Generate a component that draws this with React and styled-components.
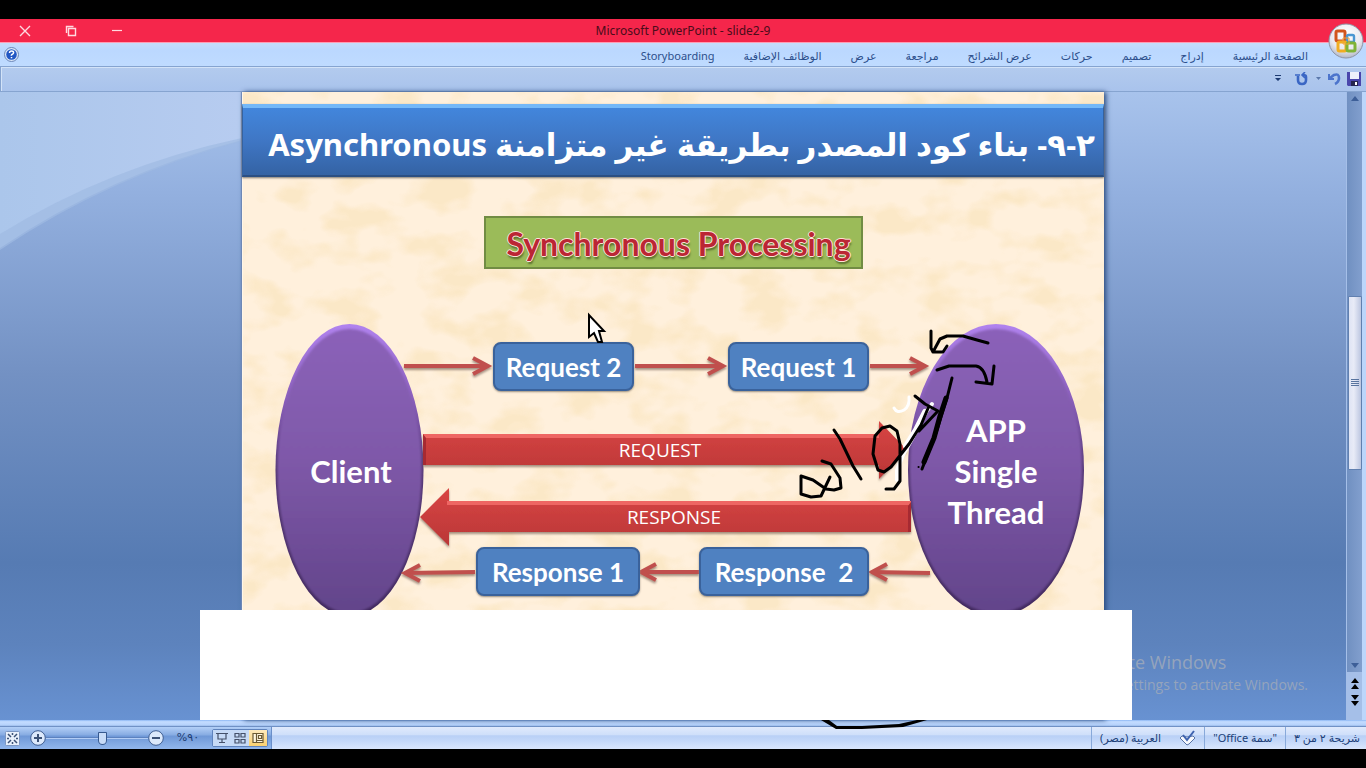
import React from "react";
import styled, { createGlobalStyle } from "styled-components";

const Global = createGlobalStyle`
  * { box-sizing: border-box; }
  body { margin: 0; background: #000; }
  button, input { font: inherit; color: inherit; margin: 0; padding: 0; border: 0; background: none; }
`;

const Screen = styled.div`
  min-height: 100vh;
  padding: 19px 0;
  background: #000;
  display: flex;
  flex-direction: column;
  overflow: hidden;
  font-family: "Noto Sans", "DejaVu Sans", sans-serif;
`;

const Frame = styled.div`
  flex: 1;
  display: flex;
  flex-direction: column;
  position: relative;
`;

const TitleBar = styled.header`
  height: 24px;
  background: #f5264b;
  border-bottom: 1px solid #ff9db4;
  display: grid;
  grid-template-columns: 1fr auto 1fr;
  align-items: center;
  color: #4a0c1a;
`;

const WindowButtons = styled.div`
  display: flex;
  gap: 30px;
  padding-left: 17px;
`;

const WindowButton = styled.button`
  width: 16px;
  height: 16px;
  display: grid;
  place-items: center;
  color: #ffd9e0;
`;

const WindowTitle = styled.h1`
  margin: 0;
  font: 400 12px/20px "Noto Sans", sans-serif;
`;

const Ribbon = styled.nav`
  height: 23px;
  background: linear-gradient(#c5dcfb, #bbd8ff 30%, #bfdbff);
  display: flex;
  align-items: center;
  justify-content: space-between;
  padding: 0 58px 0 4px;
`;

const HelpButton = styled.button`
  width: 15px;
  height: 15px;
  display: grid;
  place-items: center;
`;

const Tabs = styled.div`
  display: flex;
  direction: rtl;
  gap: 29px;
  padding-top: 2px;
`;

const Tab = styled.a`
  color: #2c4f8c;
  text-decoration: none;
  white-space: nowrap;
  font: 400 11px/20px "Noto Sans", "DejaVu Sans", sans-serif;
`;

const QuickBar = styled.div`
  height: 26px;
  background: linear-gradient(#b3cbee, #a9c3ec);
  border: 1px solid #86a4d0;
  border-width: 1px 0 1px 1px;
  box-shadow: inset 1px 1px 0 #d3e3f8;
  display: flex;
  align-items: center;
  justify-content: flex-end;
  gap: 4px;
  padding-right: 4px;
`;

const QuickButton = styled.button`
  width: ${(p) => (p.$narrow ? 8 : 16)}px;
  height: 16px;
  display: grid;
  place-items: center;
  margin-right: ${(p) => (p.$apart ? 8 : 0)}px;
`;

const OfficeButton = styled.button`
  position: absolute;
  top: 4px;
  right: 2px;
  width: 36px;
  height: 36px;
`;

const Workspace = styled.div`
  flex: 1;
  display: flex;
`;

const Canvas = styled.main`
  flex: 1;
  min-width: 0;
  display: flex;
  justify-content: center;
  position: relative;
  background: linear-gradient(#a8c3ec 0, #93b0df 16%, #7391c3 45%, #567bb3 75%, #5d83bd 88%, #6892d2);
`;

const Swoosh = styled.svg`
  position: absolute;
  left: 0;
  top: 0;
  width: 242px;
  height: 180px;
`;

const Slide = styled.article`
  width: 862px;
  flex: none;
  position: relative;
  padding-top: 12px;
  background: #fff0dc;
  border-left: 1px solid #fff6e8;
  box-shadow: 2px 0 5px #29497d, -1px 0 1px #7c96c2;
`;

const Paper = styled.svg`
  position: absolute;
  inset: 0;
  width: 100%;
  height: 100%;
`;

const SlideTitle = styled.h2`
  position: relative;
  margin: 0 0 0 -1px;
  height: 73px;
  padding: 0 8px 0 22px;
  direction: rtl;
  color: #fff;
  background: linear-gradient(#4286dc, #3f76c4 50%, #3463a4);
  border: 1px solid #35629f;
  border-top: 4px solid #74b8f8;
  border-bottom: 2px solid #2b4f82;
  box-shadow: 0 1px 2px #7c7770;
  font: 700 31px/72px "Noto Sans", "DejaVu Sans", sans-serif;
  white-space: nowrap;
`;

const Banner = styled.h3`
  position: relative;
  width: 379px;
  height: 53px;
  margin: 39px auto 0;
  padding-left: 10px;
  text-align: center;
  background: #9bbb59;
  border: 2px solid #718c43;
  color: #bb2634;
  font: 700 32px/51px Lato, "Open Sans", sans-serif;
  text-shadow: 1px 0 #fbe3d8, -1px 0 #fbe3d8, 0 1px #fbe3d8, 0 -1px #fbe3d8, 1px 3px 2px #5b7130;
`;

const Drawing = styled.svg`
  position: absolute;
  left: -1px;
  top: 0;
  width: 862px;
  height: 640px;
  overflow: visible;
  pointer-events: none;
`;

const Node = styled.div`
  position: absolute;
  left: ${(p) => p.$x - 1}px;
  top: ${(p) => p.$y}px;
  width: ${(p) => p.$w}px;
  height: 49px;
  border: 2px solid #3a629b;
  border-radius: 8px;
  background: #4f81c1;
  color: #fff;
  box-shadow: 0 1px 2px #9a8f80;
  text-align: center;
  white-space: pre;
  font: 700 26px/46px Lato, sans-serif;
`;

const Label = styled.div`
  position: absolute;
  left: ${(p) => p.$x - 1}px;
  top: ${(p) => p.$y}px;
  width: ${(p) => p.$w}px;
  text-align: center;
  color: #fff;
  font: ${(p) => (p.$light ? "400 19px/24px" : "700 31px/41px")} ${(p) => (p.$light ? '"Open Sans"' : "Lato")}, sans-serif;
`;

const Blank = styled.div`
  position: absolute;
  left: -43px;
  right: -28px;
  bottom: 0;
  height: 110px;
  background: #fff;
`;

const Watermark = styled.aside`
  position: absolute;
  right: 38px;
  bottom: 25px;
  color: #95a4bc;
  font: 400 14px/20px "Open Sans", sans-serif;
  white-space: nowrap;
`;

const WatermarkTitle = styled.p`
  margin: 0;
  font-size: 18px;
  line-height: 26px;
`;

const WatermarkText = styled.p`
  margin: 0;
`;

const ScrollColumn = styled.div`
  width: 20px;
  padding-left: 1px;
  border-right: 4px solid #bcd6fb;
  background: #a5bfe8;
  display: flex;
  flex-direction: column;
`;

const ScrollTrack = styled.div`
  flex: 1;
  background: linear-gradient(90deg, #7090c1, #829fce);
  display: flex;
  flex-direction: column;
  align-items: center;
  justify-content: space-between;
`;

const ScrollThumb = styled.div`
  width: 14px;
  height: 174px;
  margin-top: 2px;
  border: 1px solid #6180b0;
  border-radius: 1px;
  background: linear-gradient(90deg, #dfe4f4, #e8ebf7 40%, #bcc6e0);
  display: grid;
  place-items: center;
`;

const ScrollButton = styled.button`
  height: ${(p) => (p.$page ? 16 : 14)}px;
  width: 15px;
  display: grid;
  place-items: center;
`;

const PageButtons = styled.div`
  height: 48px;
  padding: 4px 0;
  display: flex;
  flex-direction: column;
`;

const Edge = styled.div`
  height: 7px;
  background: linear-gradient(#8db7f3 0, #c4dcff 25%, #b4d1fb 75%, #5578b0);
`;

const StatusBar = styled.footer`
  height: 22px;
  background: linear-gradient(#e0eafc, #cfdffa 35%, #b9d0f6 40%, #c4d8f9 65%, #d9e6fd);
  display: flex;
  align-items: stretch;
  justify-content: space-between;
`;

const ZoomGroup = styled.div`
  display: flex;
  align-items: center;
  padding-left: 4px;
  width: 272px;
  background: linear-gradient(#b3cff7, #88ade3 35%, #6f98d7 42%, #92b7ec);
  border-right: 1px solid #6b8fc9;
`;

const ZoomButton = styled.button`
  width: 16px;
  height: 16px;
  display: grid;
  place-items: center;
  margin-left: ${(p) => (p.$apart ? 10 : 0)}px;
`;

const ZoomSlider = styled.input`
  appearance: none;
  width: 102px;
  height: 16px;
  background: linear-gradient(#5c82bf 50%, #b3cdf5 50%) center / 100% 2px no-repeat;
  &::-webkit-slider-thumb {
    appearance: none;
    width: 9px;
    height: 13px;
    background: #c8dcf8;
    border: 1px solid #36598f;
    border-radius: 1px 1px 5px 5px;
  }
`;

const ZoomValue = styled.button`
  width: 48px;
  text-align: center;
  font: 400 11px/16px "DejaVu Sans", sans-serif;
  color: #1d3c72;
`;

const Views = styled.div`
  display: flex;
  height: 18px;
  border: 1px solid #5f83bd;
  border-radius: 2px;
`;

const View = styled.button`
  width: 18px;
  display: grid;
  place-items: center;
  background: ${(p) => (p.$active ? "linear-gradient(#fde9bd, #fbd170)" : "#c6daf6")};
`;

const Info = styled.div`
  display: flex;
  direction: rtl;
  padding-right: 6px;
  color: #203f78;
`;

const InfoItem = styled.span`
  display: flex;
  align-items: center;
  gap: 18px;
  padding: 0 8px;
  border-left: 1px solid #88a9da;
  font: 400 11px/20px "Noto Sans", "DejaVu Sans", sans-serif;
  white-space: nowrap;
  &:first-child { padding-right: 0; }
`;

const tabs = ["الصفحة الرئيسية", "إدراج", "تصميم", "حركات", "عرض الشرائح", "مراجعة", "عرض", "الوظائف الإضافية", "Storyboarding"];

const nodes = [
  { x: 251, y: 250, w: 141, text: "Request 2" },
  { x: 486, y: 250, w: 141, text: "Request 1" },
  { x: 234, y: 455, w: 164, text: "Response 1" },
  { x: 457, y: 455, w: 170, text: "Response  2" },
];

const arrows = [
  [162, 274, 246, 274],
  [393, 274, 481, 274],
  [628, 274, 683, 274],
  [233, 480, 163, 481],
  [457, 480, 399, 480],
  [688, 481, 630, 480],
];

function Arrow({ line: [x1, y1, x2, y2] }) {
  const d = x2 > x1 ? -15 : 15;
  return (
    <g stroke="#c0504d" strokeWidth="4" fill="none">
      <path d={`M${x1} ${y1}L${x2} ${y2}`} />
      <path d={`M${x2 + d} ${y2 - 8}L${x2} ${y2}L${x2 + d} ${y2 + 8}`} />
    </g>
  );
}

const Triangle = ({ down, color = "#3d5f98", double }) => (
  <svg width="10" height="12" viewBox="0 0 10 12" fill={color}>
    <g transform={down ? "rotate(180 5 6)" : undefined}>
      {double ? <path d="M5 0L9 5H1zM5 6L9 11H1z" /> : <path d="M5 3L9 8H1z" />}
    </g>
  </svg>
);

function Shapes() {
  return (
    <Drawing viewBox="0 0 862 640" aria-hidden="true">
      <defs>
        <linearGradient id="violet" x1="0" y1="0" x2="0" y2="1">
          <stop offset="0" stopColor="#8b62b9" />
          <stop offset="0.45" stopColor="#7f59a9" />
          <stop offset="1" stopColor="#62448a" />
        </linearGradient>
        <linearGradient id="rim" x1="0" y1="0" x2="0" y2="1">
          <stop offset="0" stopColor="#b183ef" />
          <stop offset="0.25" stopColor="#8b60bd" />
          <stop offset="0.5" stopColor="#553875" />
          <stop offset="1" stopColor="#41295e" />
        </linearGradient>
        <linearGradient id="red" x1="0" y1="0" x2="0" y2="1">
          <stop offset="0" stopColor="#d84544" />
          <stop offset="1" stopColor="#ba3636" />
        </linearGradient>
        <filter id="drop" x="-10%" y="-20%" width="120%" height="150%">
          <feDropShadow dx="0" dy="2" stdDeviation="1" floodColor="#6b5147" floodOpacity="0.6" />
        </filter>
        <filter id="soften"><feGaussianBlur stdDeviation="1" /></filter>
      </defs>
      {[[107.5, 74], [754, 88]].map(([cx, rx]) => (
        <g key={cx}>
          <ellipse cx={cx} cy="378" rx={rx} ry="146" fill="url(#rim)" />
          <ellipse cx={cx} cy="379" rx={rx - 2} ry="142" fill="url(#violet)" filter="url(#soften)" />
        </g>
      ))}
      <g filter="url(#drop)">
        <path d="M181 342H637V329L665 358L637 387V373H181z" fill="url(#red)" />
        <path d="M181 344H637" stroke="#ee6663" strokeWidth="4" />
        <path d="M181 342L184 346V373H181z" fill="#a62c30" />
        <path d="M669 409H207V396L178 425L207 454V440H669z" fill="url(#red)" />
        <path d="M205 411H669" stroke="#ee6663" strokeWidth="4" />
        <path d="M669 410L666 414V440H669z" fill="#a62c30" />
      </g>
      <g filter="url(#drop)">
        {arrows.map((line) => <Arrow key={line.join()} line={line} />)}
      </g>
    </Drawing>
  );
}

function Ink() {
  return (
    <Drawing viewBox="242 92 862 640" aria-hidden="true">
      <g fill="none" strokeLinecap="round" strokeLinejoin="round">
        <g stroke="#fff">
          <path strokeWidth="3" d="M909 397Q910 406 904 410Q897 414 894 408" />
          <path strokeWidth="4" d="M932 404L922 417L914 435L903 455L897 470V480" />
          <path strokeWidth="6" d="M925 412L916 430L906 446" />
        </g>
        <g stroke="#000" strokeWidth="3">
          <path d="M988 343L977 340L963 336L947 336L940 339L933 352L931 348V331M933 352L943 352L947 346" />
          <path d="M937 370L949 366H976Q984 367 987 382M994 366L992 384L976 382" />
          <path d="M952 378L947 398L936 433L922 469" />
          <path strokeWidth="5" d="M946 398L940 416L934 438L924 462" />
          <path d="M915 396L925 404L938 411L919 431M929 406L921 425L909 444L891 467L884 472L878 470L873 454L875 436L882 428L890 426L897 431L900 444L900 481L894 489H886" />
          <path d="M834 430L840 439L853 466L861 479M822 461L831 464L840 478L841 488L834 490L826 489L813 480L801 476V494L811 497L821 496L830 477" />
          <path strokeWidth="2" d="M918.500 467h.1" />
        </g>
      </g>
      <path d="M821 720H829L837 726L862 726L880 725L899 724L917 720H927L903 727L882 728L862 729H836z" fill="#000" />
    </Drawing>
  );
}

function Pointer() {
  return (
    <Drawing viewBox="242 92 862 640" aria-hidden="true">
      <path d="M589 315V337L594 333L598 342H602L599 331H604z" fill="#fff" stroke="#000" strokeWidth="2" />
    </Drawing>
  );
}

export default function App() {
  return (
    <Screen>
      <Global />
      <Frame>
        <TitleBar>
          <WindowButtons>
            <WindowButton aria-label="Close"><svg width="12" height="12" stroke="currentColor" strokeWidth="1.4"><path d="M1 1L11 11M11 1L1 11" /></svg></WindowButton>
            <WindowButton aria-label="Restore"><svg width="12" height="12" stroke="currentColor" strokeWidth="1.4" fill="none"><path d="M3.500 3.500H10.500V10.500H3.500zM1.500 8V1.500H8.500" /></svg></WindowButton>
            <WindowButton aria-label="Minimize"><svg width="12" height="12" stroke="currentColor" strokeWidth="1.2"><path d="M1 5.500H11" /></svg></WindowButton>
          </WindowButtons>
          <WindowTitle>Microsoft PowerPoint - slide2-9</WindowTitle>
        </TitleBar>
        <Ribbon>
          <HelpButton aria-label="Help">
            <svg width="15" height="15" viewBox="0 0 15 15"><circle cx="7.500" cy="7.500" r="7" fill="#dbe7f8" stroke="#6c87b8" /><circle cx="7.500" cy="7.500" r="5.300" fill="#2257c4" /><path d="M5.500 6Q5.600 4 7.600 4T9.600 5.700Q9.500 6.800 8.300 7.300T7.500 8.700M7.500 10v1.200" fill="none" stroke="#fff" strokeWidth="1.500" /></svg>
          </HelpButton>
          <Tabs>
            {tabs.map((t) => <Tab key={t} href="#">{t}</Tab>)}
          </Tabs>
        </Ribbon>
        <QuickBar>
          <QuickButton $narrow $apart aria-label="Customize"><svg width="6" height="8" fill="#1d3b72"><path d="M0 0H6V1H0zM0 3H6L3 6z" /></svg></QuickButton>
          <QuickButton aria-label="Repeat"><svg width="14" height="14" fill="none" stroke="#3a66c4" strokeWidth="2.600"><path d="M3 4V8Q3 12 7 12T11 8V5Q11 3 8 3" /><path d="M0 3H5M10 0L7 3L10 6" strokeWidth="1.600" /></svg></QuickButton>
          <QuickButton $narrow aria-label="Undo list"><svg width="5" height="4" fill="#5a78ab"><path d="M0 0H5L2.500 3z" /></svg></QuickButton>
          <QuickButton aria-label="Undo"><svg width="14" height="14" fill="none" stroke="#4c74cc" strokeWidth="2.600"><path d="M3 6L7 3Q12 1 12 6Q12 10 8 12" /><path d="M2 2V7H7" strokeWidth="2" /></svg></QuickButton>
          <QuickButton aria-label="Save"><svg width="14" height="14"><path d="M0 0H14V14H1L0 13z" fill="#4a46ac" /><path d="M3 0H12V7H3z" fill="#eef1fb" /><path d="M4 9H11V14H4z" fill="#26264e" /><path d="M8 10H10V13H8z" fill="#fff" /></svg></QuickButton>
        </QuickBar>
        <Workspace>
          <Canvas>
            <Swoosh viewBox="0 0 242 180" preserveAspectRatio="none" aria-hidden="true">
              <defs><linearGradient id="sky" x1="0" y1="0" x2="1" y2="0"><stop offset="0" stopColor="#abc6eb" /><stop offset="1" stopColor="#b7ccf0" /></linearGradient></defs>
              <path d="M0 0H242V48Q110 82 0 156z" fill="url(#sky)" />
              <path d="M242 49Q110 84 0 158V142Q110 74 242 46z" fill="#9fbbe3" opacity="0.7" />
            </Swoosh>
            <Watermark>
              <WatermarkTitle>Activate Windows</WatermarkTitle>
              <WatermarkText>Go to Settings to activate Windows.</WatermarkText>
            </Watermark>
            <Slide>
              <Paper aria-hidden="true">
                <filter id="grain" x="0" y="0" width="100%" height="100%" colorInterpolationFilters="sRGB"><feTurbulence type="fractalNoise" baseFrequency="0.022 0.035" numOctaves="3" seed="4" /><feColorMatrix values="0 0 0 0 0.96  0 0 0 0 0.85  0 0 0 0 0.62  4 0 0 0 -1.8" /></filter>
                <rect width="100%" height="100%" filter="url(#grain)" opacity="0.32" />
              </Paper>
              <SlideTitle>٢-٩- بناء كود المصدر بطريقة غير متزامنة Asynchronous</SlideTitle>
              <Banner>Synchronous Processing</Banner>
              <Shapes />
              {nodes.map((n) => <Node key={n.text} $x={n.x} $y={n.y} $w={n.w}>{n.text}</Node>)}
              <Label $x={34} $y={359} $w={150}>Client</Label>
              <Label $x={680} $y={318} $w={148}>APP<br />Single<br />Thread</Label>
              <Label $light $x={343} $y={346} $w={150}>REQUEST</Label>
              <Label $light $x={357} $y={413} $w={150}>RESPONSE</Label>
              <Blank />
              <Ink />
              <Pointer />
            </Slide>
          </Canvas>
          <ScrollColumn>
            <ScrollTrack>
              <ScrollButton aria-label="Scroll up"><Triangle /></ScrollButton>
              <ScrollThumb><svg width="8" height="8" stroke="#58749f"><path d="M0 .5H8M0 2.500H8M0 4.500H8M0 6.500H8" /></svg></ScrollThumb>
              <ScrollButton aria-label="Scroll down"><Triangle down /></ScrollButton>
            </ScrollTrack>
            <PageButtons>
              <ScrollButton $page aria-label="Previous slide"><Triangle double color="#000" /></ScrollButton>
              <ScrollButton $page aria-label="Next slide"><Triangle double down color="#000" /></ScrollButton>
            </PageButtons>
          </ScrollColumn>
        </Workspace>
        <Edge />
        <StatusBar>
          <ZoomGroup>
            <ZoomButton aria-label="Fit to window"><svg width="15" height="15"><rect x=".5" y=".5" width="14" height="14" rx="1" fill="#e9f1fc" stroke="#7d97c2" /><path d="M3 3L6 6M12 3L9 6M3 12L6 9M12 12L9 9M7.500 2V4M7.500 11V13M2 7.500H4M11 7.500H13" stroke="#3c5276" strokeWidth="1.500" /></svg></ZoomButton>
            <ZoomButton $apart aria-label="Zoom in"><svg width="16" height="16"><circle cx="8" cy="8" r="7.300" fill="#dce9fb" stroke="#405f92" /><path d="M4 8H12M8 4V12" stroke="#3c5276" strokeWidth="2" /></svg></ZoomButton>
            <ZoomSlider type="range" aria-label="Zoom" min="0" max="100" defaultValue="56" />
            <ZoomButton aria-label="Zoom out"><svg width="16" height="16"><circle cx="8" cy="8" r="7.300" fill="#dce9fb" stroke="#405f92" /><path d="M4 8H12" stroke="#3c5276" strokeWidth="2" /></svg></ZoomButton>
            <ZoomValue>%٩٠</ZoomValue>
            <Views>
              <View aria-label="Slide show"><svg width="12" height="12" fill="none" stroke="#445069" strokeWidth="1.200"><path d="M0 1.500H12M2 2V7H10V2M6 7V10M3 10.500H9" /></svg></View>
              <View aria-label="Slide sorter"><svg width="12" height="12" fill="none" stroke="#445069" strokeWidth="1.200"><path d="M1 1.500H5V5H1zM7 1.500H11V5H7zM1 7.500H5V11H1zM7 7.500H11V11H7z" /></svg></View>
              <View $active aria-label="Normal"><svg width="12" height="12" fill="#fff7e0" stroke="#6b5a35" strokeWidth="1.200"><path d="M1 1.500H11V10.500H1zM4.500 1.500V10.500M6.500 3.500H9.500V6.500H6.500zM4.500 8.500H11" /></svg></View>
            </Views>
          </ZoomGroup>
          <Info>
            <InfoItem>شريحة ٢ من ٣</InfoItem>
            <InfoItem>"سمة Office"</InfoItem>
            <InfoItem>
              <svg width="17" height="16" fill="none"><path d="M1 8L3 6L8 7L14 6L16 8L10 14L8 15z" fill="#f6f8fd" stroke="#5672a4" /><path d="M4 5L8 10L15 1" stroke="#3e63b0" strokeWidth="2" /></svg>
              العربية (مصر)
            </InfoItem>
          </Info>
        </StatusBar>
        <OfficeButton aria-label="Office">
          <svg width="36" height="36" viewBox="0 0 36 36">
            <defs><radialGradient id="pearl" cy="0.3" r="0.7"><stop offset="0" stopColor="#fff" /><stop offset="0.65" stopColor="#e9e9ef" /><stop offset="1" stopColor="#b4b9c8" /></radialGradient></defs>
            <circle cx="18" cy="18" r="17" fill="url(#pearl)" stroke="#8e94a6" />
            <g fill="none" strokeWidth="3">
              <rect x="8" y="8" width="9" height="10" rx="1.500" stroke="#d2551c" />
              <rect x="19" y="12" width="7" height="7" rx="1.500" stroke="#4a97d2" strokeWidth="2.400" />
              <rect x="10" y="19" width="8" height="9" rx="1.500" stroke="#f1ad22" />
              <rect x="19" y="20" width="8" height="8" rx="1.500" stroke="#7fb336" />
              <path d="M15 15H21V21H15z" stroke="#f0a23a" strokeWidth="1" />
            </g>
          </svg>
        </OfficeButton>
      </Frame>
    </Screen>
  );
}
